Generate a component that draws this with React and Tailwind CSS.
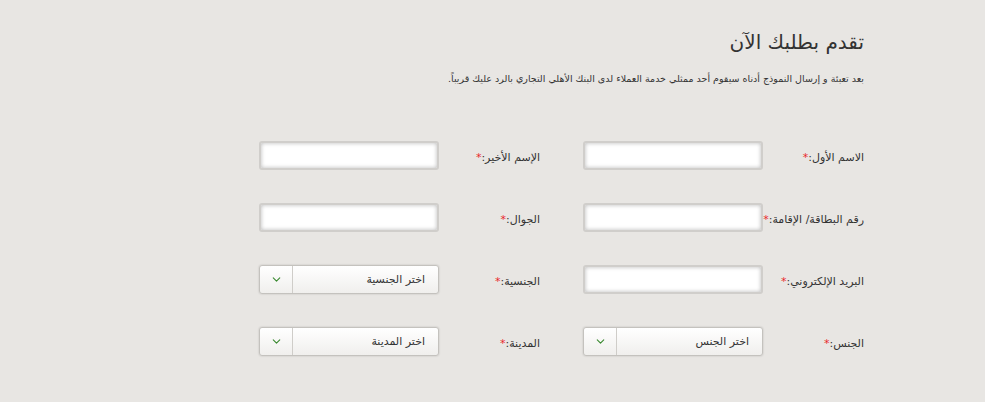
import { ChevronDown } from 'lucide-react'

const fields = [
  [
    { label: 'الاسم الأول:', type: 'input' },
    { label: 'الإسم الأخير:', type: 'input' },
  ],
  [
    { label: 'رقم البطاقة/ الإقامة:', type: 'input' },
    { label: 'الجوال:', type: 'input' },
  ],
  [
    { label: 'البريد الإلكتروني:', type: 'input' },
    { label: 'الجنسية:', type: 'select', placeholder: 'اختر الجنسية' },
  ],
  [
    { label: 'الجنس:', type: 'select', placeholder: 'اختر الجنس' },
    { label: 'المدينة:', type: 'select', placeholder: 'اختر المدينة' },
  ],
]

function FormField({ field }) {
  return (
    <div className="flex items-center">
      <label className="w-[101px] shrink-0 pt-[4px] text-[11px] text-[#333]">
        {field.label}
        <span className="text-[#e8262a]">*</span>
      </label>
      {field.type === 'input' ? (
        <input
          type="text"
          className="h-[29px] w-[180px] rounded-[3px] border-2 border-[#d0cecb] bg-white shadow-[inset_0_0_4px_rgba(0,0,0,0.28)] outline-none"
        />
      ) : (
        <div className="flex h-[29px] w-[180px] items-center rounded-[3px] border border-[#c4c2be] bg-gradient-to-b from-white to-[#f0efed] shadow-[0_0_2px_rgba(0,0,0,0.2)]">
          <span className="flex-1 pr-[13px] text-[11px] text-[#333]">{field.placeholder}</span>
          <span className="flex h-full w-[33px] items-center justify-center border-r border-[#cfcdc9]">
            <ChevronDown size={13} strokeWidth={2} className="text-[#3a8a30]" />
          </span>
        </div>
      )}
    </div>
  )
}

export default function App() {
  return (
    <div
      dir="rtl"
      className="min-h-[402px] bg-[#e8e6e3] pr-[121px] pt-[27px]"
      style={{ fontFamily: '"DejaVu Sans", Tahoma, sans-serif' }}
    >
      <h1 className="text-[20px] leading-[30px] text-[#333]">تقدم بطلبك الآن</h1>
      <p className="mt-[15px] text-[9.5px] text-[#333]">
        بعد تعبئة و إرسال النموذج أدناه سيقوم أحد ممثلي خدمة العملاء لدى البنك الأهلي التجاري بالرد عليك قريباً.
      </p>

      <div className="mt-[55px] flex w-[605px] flex-col gap-[33px]">
        {fields.map((row, i) => (
          <div key={i} className="flex gap-[43px]">
            {row.map((field) => (
              <FormField key={field.label} field={field} />
            ))}
          </div>
        ))}
      </div>
    </div>
  )
}
